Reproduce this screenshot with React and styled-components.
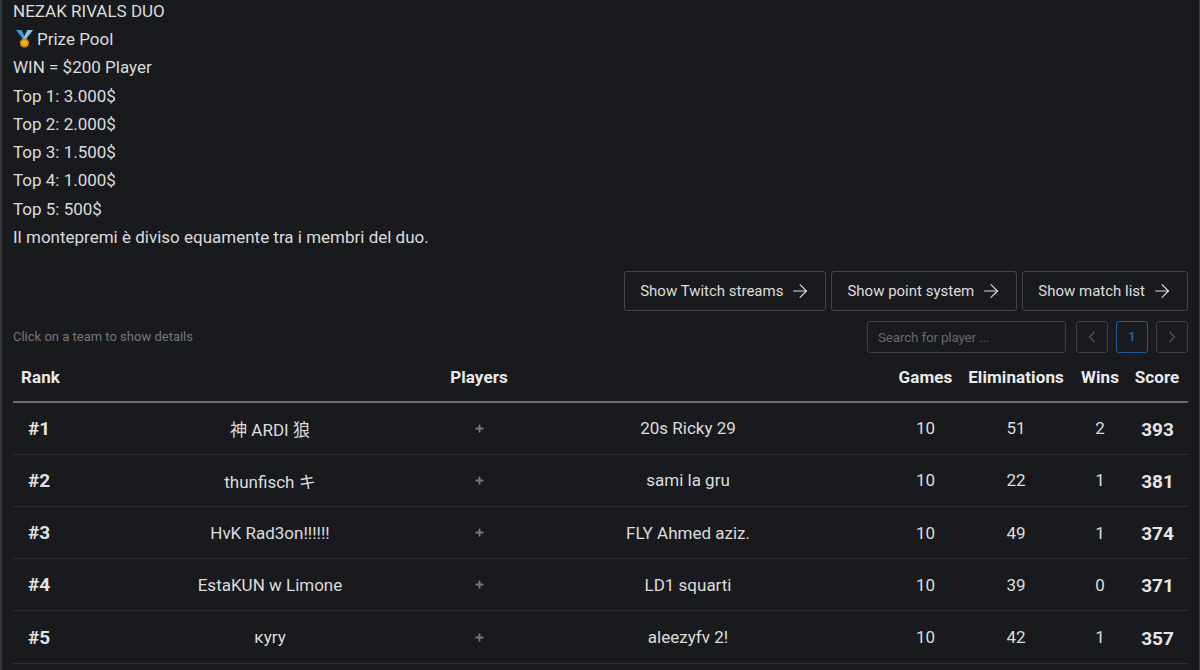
import React from "react";
import styled, { createGlobalStyle } from "styled-components";
import { ArrowRight, ChevronLeft, ChevronRight, Plus } from "lucide-react";

const Global = createGlobalStyle`
  html, body { margin: 0; padding: 0; background: #191a1e; overflow: hidden; }
  * { box-sizing: border-box; }
`;
const F = `Roboto, "Noto Sans CJK JP", sans-serif`;

const Page = styled.div`
  width: 1200px; height: 670px; overflow: hidden;
  background: #191a1e; color: #e4e4e4;
  font-family: ${F}; font-size: 17px;
  border-left: 2px solid #33353a; border-right: 1px solid #4a332a;
  padding: 0 11px 0 11px;
`;
const Description = styled.div`
  display: flex; flex-direction: column; margin-top: -3.4px;
`;
const Line = styled.div`
  height: 28.3px; line-height: 28.3px; font-size: 17px; color: #dcdcdc;
`;
const Medal = styled.svg`
  width: 20px; height: 20px; vertical-align: -4px; margin-right: 4px;
`;
const Actions = styled.div`
  display: flex; justify-content: flex-end; gap: 5px; margin-top: 19.4px;
`;
const ActionButton = styled.button`
  display: flex; align-items: center; gap: 6px;
  height: 40px; padding: 0 14px 0 15px; white-space: nowrap;
  background: transparent; border: 1px solid #44464b; border-radius: 3px;
  color: #dedede; font: 400 15px ${F};
`;
const Arrow = styled(ArrowRight)`
  flex: none;
`;
const Toolbar = styled.div`
  display: flex; align-items: center; justify-content: space-between; margin-top: 10px; height: 32px;
`;
const Hint = styled.div`
  font-size: 13px; color: #75777b;
`;
const Controls = styled.div`
  display: flex; align-items: center; gap: 8px;
`;
const Search = styled.input`
  width: 199px; height: 32px; margin-right: 2px; padding: 0 10px;
  background: transparent; border: 1px solid #3d3f44; border-radius: 3px;
  color: #ddd; font: 400 13.5px ${F}; letter-spacing: -0.2px;
  &::placeholder { color: #66686c; opacity: 1; }
`;
const PageBtn = styled.div`
  width: 32px; height: 32px; display: flex; align-items: center; justify-content: center;
  border: 1px solid ${p => (p.$active ? "#1f5a9e" : "#3d3f44")}; border-radius: 3px;
  color: ${p => (p.$active ? "#2c6cb4" : "#55575b")}; font-size: 13px; font-weight: 500;
`;
const Grid = `
  display: grid;
  grid-template-columns: 142px 230px 188px 230px 1fr 69px 112px 56px 58px;
  padding-right: 2px;
  align-items: center;
`;
const Head = styled.div`
  ${Grid}
  height: 50px; border-bottom: 2px solid #6b6d70;
  font-size: 17px; font-weight: 700; color: #eaeaea; letter-spacing: 0.1px;
`;
const HeadCell = styled.div`
  text-align: center; white-space: nowrap;
`;
const RankHead = styled(HeadCell)`
  text-align: left; padding-left: 8px;
`;
const PlayersHead = styled(HeadCell)`
  grid-column: 2 / span 3;
`;
const GamesHead = styled(HeadCell)`
  grid-column: 6;
`;
const Row = styled.div`
  ${Grid}
  height: 52.2px; border-bottom: 1px solid #2c2e32; font-size: 17px; color: #dddddd;
`;
const Rank = styled.div`
  padding-left: 15px; font-size: 19px; font-weight: 700; color: #e2e2e2;
`;
const Cell = styled.div`
  text-align: center; white-space: nowrap;
`;
const GamesCell = styled(Cell)`
  grid-column: 6;
`;
const Join = styled.div`
  display: flex; justify-content: center; color: #77797c;
`;
const Score = styled(Cell)`
  font-size: 19px; font-weight: 700; color: #e6e6e6; padding: 2px 0 0 1px;
`;

const rows = [
  ["#1", "神 ARDI 狼", "20s Ricky 29", 10, 51, 2, 393],
  ["#2", "thunfisch キ", "sami la gru", 10, 22, 1, 381],
  ["#3", "HvK Rad3on!!!!!!", "FLY Ahmed aziz.", 10, 49, 1, 374],
  ["#4", "EstaKUN w Limone", "LD1 squarti", 10, 39, 0, 371],
  ["#5", "ĸyry", "aleezyfv 2!", 10, 42, 1, 357],
];
const lines = ["WIN = $200 Player", "Top 1: 3.000$", "Top 2: 2.000$", "Top 3: 1.500$", "Top 4: 1.000$", "Top 5: 500$", "Il montepremi è diviso equamente tra i membri del duo."];
const buttons = ["Show Twitch streams", "Show point system", "Show match list"];

export default function App() {
  return (
    <Page>
      <Global />
      <Description>
        <Line>NEZAK RIVALS DUO</Line>
        <Line>
          <Medal viewBox="0 0 20 20">
            <path d="M3 1h5.5l4.5 9h-3z" fill="#3f9bd6" />
            <path d="M20 1h-5.5L10 10h3z" fill="#86c8ec" />
            <circle cx="11.5" cy="14" r="4.6" fill="#c98a12" />
            <circle cx="11.5" cy="14" r="2.8" fill="#eeb02c" />
          </Medal>
          Prize Pool
        </Line>
        {lines.map(l => <Line key={l}>{l}</Line>)}
      </Description>
      <Actions>
        {buttons.map(t => (
          <ActionButton key={t}>{t}<Arrow size={22} strokeWidth={1.2} /></ActionButton>
        ))}
      </Actions>
      <Toolbar>
        <Hint>Click on a team to show details</Hint>
        <Controls>
          <Search placeholder="Search for player ..." />
          <PageBtn><ChevronLeft size={20} strokeWidth={1.3} /></PageBtn>
          <PageBtn $active>1</PageBtn>
          <PageBtn><ChevronRight size={20} strokeWidth={1.3} /></PageBtn>
        </Controls>
      </Toolbar>
      <Head>
        <RankHead>Rank</RankHead>
        <PlayersHead>Players</PlayersHead>
        <GamesHead>Games</GamesHead>
        <HeadCell>Eliminations</HeadCell>
        <HeadCell>Wins</HeadCell>
        <HeadCell>Score</HeadCell>
      </Head>
      {rows.map(r => (
        <Row key={r[0]}>
          <Rank>{r[0]}</Rank>
          <Cell>{r[1]}</Cell>
          <Join><Plus size={11} strokeWidth={4} /></Join>
          <Cell>{r[2]}</Cell>
          <GamesCell>{r[3]}</GamesCell>
          <Cell>{r[4]}</Cell>
          <Cell>{r[5]}</Cell>
          <Score>{r[6]}</Score>
        </Row>
      ))}
    </Page>
  );
}
